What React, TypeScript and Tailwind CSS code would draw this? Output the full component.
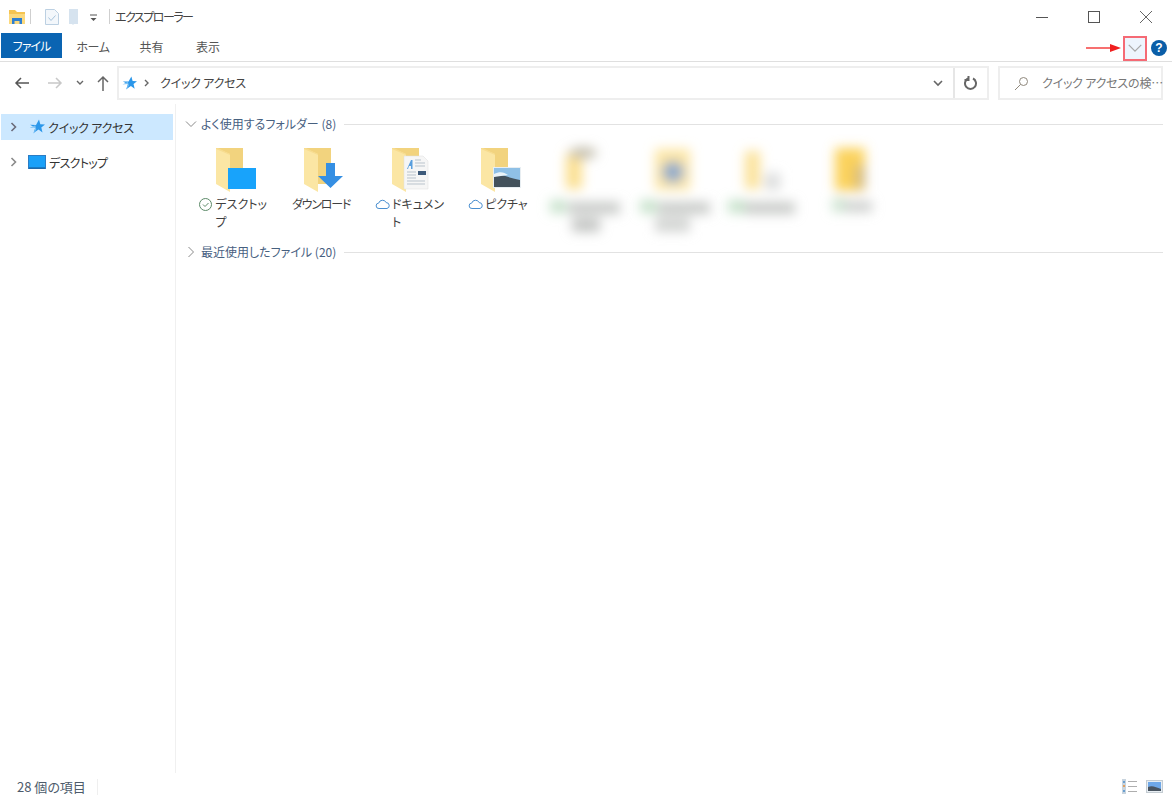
import type { ReactNode } from "react";

const jp = "font-['Noto_Sans_CJK_JP','Noto_Sans',sans-serif] [font-feature-settings:'palt']";

function Chevron({ open, className }: { open?: boolean; className?: string }) {
  return (
    <svg width="12" height="12" viewBox="0 0 12 12" fill="none" stroke="currentColor" strokeWidth="1" className={className}>
      <path d={open ? "M1 3.500l5 5 5-5" : "M3.500 1l5 5-5 5"} />
    </svg>
  );
}

function Star({ size = 16 }: { size?: number }) {
  return (
    <svg width={size} height={size} viewBox="0 0 16 16">
      <path d="M10 0.500l1.300 4.700 4.700.3-3.700 3 1.200 5-4-2.900-5 3.400 1.800-5.200L1 5.800l6 .1z" fill="#2b97ea" />
      <path d="M0.500 9l5.800-.6-1.800 6.600 2.800-4.800-1-4z" fill="#7cc2f4" />
    </svg>
  );
}

function FolderBack({ children }: { children?: ReactNode }) {
  return (
    <svg width="44" height="46" viewBox="0 0 44 46" className="block">
      <path d="M3 1h25v36H3z" fill="#f2d37e" />
      <path d="M1 1l14 6v38L1 37z" fill="#fbe6a4" />
      <path d="M1 1h2l12 6v1L1 2z" fill="#f7dc90" />
      {children}
    </svg>
  );
}

const folderArt: ReactNode[] = [
  <rect key="a" x="13" y="21" width="28" height="21" fill="#18a3fb" />,
  <path key="b" d="M23 16h9v13h8L27.500 41 15 29h8z" fill="#358fe3" />,
  <g key="c">
    <path d="M13 9h19l5 5v28H13z" fill="#f6f6f6" stroke="#dcdcdc" strokeWidth="0.500" />
    <path d="M16 22l4-9h1.500v9h-1.500v-3h-2l-1 3z" fill="#5a9fde" />
    <path d="M24 13h6M24 16h10M24 19h10M16 25h9M16 28h9M16 31h9M16 34h18M16 37h18" stroke="#b9c3cc" strokeWidth="1" />
    <rect x="27" y="24" width="8" height="4" fill="#3d5a7a" />
  </g>,
  <g key="d">
    <rect x="13" y="20" width="28" height="21" fill="#e8eef2" />
    <rect x="14" y="21" width="26" height="19" fill="#8fc0e6" />
    <path d="M14 30c6-4 12 0 26 3v7H14z" fill="#44525c" />
    <path d="M14 27c6-3 10-2 14 1l-14 2z" fill="#eaf3f8" />
  </g>,
];

function Tile({ art, lines, status, tight }: { art: number; lines: string[]; status?: "ok" | "cloud"; tight?: boolean }) {
  return (
    <div className="w-[88.400px] shrink-0 flex flex-col items-center">
      <div className="h-[46px] pl-[8px]">
        <FolderBack>{folderArt[art]}</FolderBack>
      </div>
      <div className={`mt-[2px] flex justify-center text-[12px] leading-[18px] text-[#3f3f3f] ${tight ? "tracking-[-1.200px]" : ""}`}>
        {status === "ok" && (
          <svg width="17" height="19" viewBox="0 0 17 19" fill="none" className="shrink-0">
            <circle cx="7.500" cy="9.500" r="6" stroke="#5c8a68" />
            <path d="M5 9.500l2 2 3.500-3.500" stroke="#5c8a68" />
          </svg>
        )}
        {status === "cloud" && (
          <svg width="17" height="19" viewBox="0 0 17 19" fill="none" className="shrink-0">
            <path d="M4 13.500a2.700 2.700 0 0 1-.3-5.400 4 4 0 0 1 7.500-.5 3 3 0 0 1 .8 5.900z" stroke="#4a8fd0" />
          </svg>
        )}
        <div className="text-left whitespace-nowrap">
          {lines.map((l) => (
            <div key={l}>{l}</div>
          ))}
        </div>
      </div>
    </div>
  );
}

function BlurTile({ tile }: { tile: number }) {
  const parts = [
    <g key="0">
      <rect x="24" y="6" width="16" height="36" fill="#fbdf90" />
      <ellipse cx="41" cy="6" rx="14" ry="6" fill="#c4bfae" />
      <rect x="8" y="53" width="16" height="13" fill="#c6e2ca" />
      <rect x="26" y="55" width="52" height="12" fill="#c8cac8" />
      <rect x="30" y="71" width="28" height="14" fill="#c4c6c4" />
    </g>,
    <g key="1">
      <rect x="25" y="2" width="35" height="41" fill="#fde6a4" />
      <circle cx="43" cy="25" r="11" fill="#8fabcc" />
      <rect x="10" y="53" width="17" height="13" fill="#c6e2ca" />
      <rect x="28" y="55" width="52" height="12" fill="#c8cac8" />
      <rect x="25" y="70" width="35" height="15" fill="#d4d6d4" />
    </g>,
    <g key="2">
      <rect x="26" y="4" width="15" height="38" fill="#fbe29a" />
      <rect x="46" y="26" width="15" height="17" fill="#dcdddd" />
      <rect x="9" y="53" width="17" height="13" fill="#c6e2ca" />
      <rect x="26" y="55" width="50" height="12" fill="#c8cac8" />
    </g>,
    <g key="3">
      <rect x="28" y="1" width="30" height="43" fill="#fbd25c" />
      <rect x="48" y="18" width="10" height="24" fill="#d2b87c" />
      <rect x="25" y="51" width="14" height="14" fill="#cfe5d2" />
      <rect x="38" y="54" width="27" height="11" fill="#cdcfcd" />
    </g>,
  ];
  return (
    <div className="w-[88.400px] shrink-0">
      <svg width="88" height="95" viewBox="0 0 88 95" className="block overflow-visible">
        <defs>
          <filter id={`soft${tile}`} x="-40%" y="-40%" width="180%" height="180%">
            <feGaussianBlur stdDeviation="6" />
          </filter>
        </defs>
        <g filter={`url(#soft${tile})`}>{parts[tile]}</g>
      </svg>
    </div>
  );
}

function SectionHead({ label, open, className }: { label: string; open?: boolean; className?: string }) {
  return (
    <div className={`flex items-center h-[22px] ${className ?? ""}`}>
      <Chevron open={open} className="text-[#8a8a8a] ml-[9px] mr-[4px] shrink-0" />
      <span className="text-[12px] text-[#47607f] whitespace-nowrap">{label}</span>
      <div className="flex-1 h-px bg-[#e2e2e2] ml-[8px]" />
    </div>
  );
}

export default function App() {
  return (
    <div className={`w-[1172px] h-[800px] overflow-hidden bg-white flex flex-col ${jp}`}>
      {/* title bar */}
      <div className="h-[33px] flex items-center shrink-0">
        <svg width="18" height="16" viewBox="0 0 18 16" className="ml-[8px]">
          <path d="M1 1h6l2 2h8v12H1z" fill="#f5c451" />
          <rect x="1" y="5" width="16" height="10" fill="#fbd97e" />
          <path d="M4 9h10v6h-2.500v-3h-5v3H4z" fill="#2f7fd0" />
        </svg>
        <div className="w-px h-[15px] bg-[#cfcfcf] ml-[4px]" />
        <svg width="16" height="18" viewBox="0 0 16 18" className="ml-[13px]">
          <path d="M1.500 1.500h9l4 4v11h-13z" fill="#f3f7fb" stroke="#bcd0e2" />
          <path d="M4.500 9.500l2.500 3 4.500-5" fill="none" stroke="#a8c4dc" />
        </svg>
        <svg width="12" height="18" viewBox="0 0 12 18" className="ml-[8px]">
          <path d="M1 1h9v15H6l-1 1-1-1H1z" fill="#d6e3ef" />
        </svg>
        <svg width="8" height="8" viewBox="0 0 8 8" className="ml-[10px] mt-[3px]">
          <path d="M0 1h7" stroke="#555" />
          <path d="M0.500 4h6L3.500 7z" fill="#555" />
        </svg>
        <div className="w-px h-[15px] bg-[#cfcfcf] ml-[11px]" />
        <span className="ml-[5px] text-[12px] text-[#444] tracking-[-1.500px]">エクスプローラー</span>
        <div className="flex-1" />
        <svg width="14" height="14" viewBox="0 0 14 14" className="mr-[38px]" stroke="#555" fill="none">
          <path d="M1 7.500h12" />
        </svg>
        <svg width="14" height="14" viewBox="0 0 14 14" className="mr-[38px]" stroke="#555" fill="none">
          <rect x="1.500" y="1.500" width="11" height="11" />
        </svg>
        <svg width="14" height="14" viewBox="0 0 14 14" className="mr-[19px]" stroke="#666" fill="none">
          <path d="M1 1l12 12M13 1L1 13" />
        </svg>
      </div>

      {/* ribbon tabs */}
      <div className="h-[29px] shrink-0 flex border-b border-[#dfdfdf] pl-[1px] text-[12px] text-[#555] whitespace-nowrap">
        <div className="w-[61px] h-[25px] bg-[#0a64b2] text-white flex items-center justify-center tracking-[-1px]">ファイル</div>
        <div className="ml-[15px] w-[32px] h-[27px] flex items-center justify-center tracking-[-0.500px]">ホーム</div>
        <div className="ml-[30px] w-[25px] h-[27px] flex items-center justify-center">共有</div>
        <div className="ml-[31px] w-[26px] h-[27px] flex items-center justify-center">表示</div>
        <div className="flex-1" />
        <div className="h-[26px] flex items-center mt-[2px]">
          <svg width="36" height="10" viewBox="0 0 36 10">
            <path d="M0 5h26" stroke="#f43333" strokeWidth="1.400" />
            <path d="M24 1l11 4-11 4z" fill="#f01f1f" />
          </svg>
          <div className="ml-[1px] w-[24px] h-[25px] border-2 border-[#f56a75] bg-[#eef5fd] flex items-center justify-center">
            <Chevron open className="text-[#a8a8a8] scale-125" />
          </div>
          <div className="ml-[4px] mr-[5px] w-[16px] h-[16px] rounded-full bg-[#0a5ea8] text-white text-[12px] font-bold leading-[16px] text-center font-['Liberation_Sans',sans-serif]">
            ?
          </div>
        </div>
      </div>

      {/* address row */}
      <div className="h-[42px] shrink-0 flex items-center">
        <svg width="16" height="14" viewBox="0 0 16 14" className="ml-[14px]" fill="none" stroke="#555" strokeWidth="1.500">
          <path d="M15 7H2M7 2L2 7l5 5" />
        </svg>
        <svg width="16" height="14" viewBox="0 0 16 14" className="ml-[17px]" fill="none" stroke="#c8c8c8" strokeWidth="1.500">
          <path d="M1 7h13M9 2l5 5-5 5" />
        </svg>
        <svg width="8" height="6" viewBox="0 0 8 6" className="ml-[13px]" fill="none" stroke="#666" strokeWidth="1.400">
          <path d="M1 1l3 3 3-3" />
        </svg>
        <svg width="14" height="16" viewBox="0 0 14 16" className="ml-[12px]" fill="none" stroke="#666" strokeWidth="1.500">
          <path d="M7 16V2M2 7l5-5 5 5" />
        </svg>
        <div className="ml-[7px] w-[872px] h-[34px] border-2 border-[#eeeeee] flex items-center">
          <div className="flex-1 flex items-center pl-[3px]">
            <Star size={15} />
            <svg width="6" height="8" viewBox="0 0 6 8" className="ml-[7px]" fill="none" stroke="#666" strokeWidth="1.400">
              <path d="M1 1l3 3-3 3" />
            </svg>
            <span className="ml-[10px] text-[12px] text-[#444] tracking-[-0.200px]">クイック アクセス</span>
          </div>
          <svg width="10" height="7" viewBox="0 0 10 7" className="mr-[10px]" fill="none" stroke="#666" strokeWidth="1.600">
            <path d="M1 1l4 4 4-4" />
          </svg>
          <div className="w-[34px] h-full border-l-2 border-[#e6e6e6] flex items-center justify-center">
            <svg width="14" height="14" viewBox="0 0 14 14" fill="none" stroke="#666" strokeWidth="2">
              <path d="M4 2.500a5.500 5.500 0 1 0 5 0M4.500 0v4h-4" />
            </svg>
          </div>
        </div>
        <div className="ml-[9px] w-[165px] h-[34px] border-2 border-[#eeeeee] flex items-center">
          <svg width="15" height="15" viewBox="0 0 15 15" className="ml-[14px] shrink-0" fill="none" stroke="#8f887c" strokeWidth="1">
            <circle cx="9.500" cy="5.500" r="4" />
            <path d="M6.500 8.500L1 14" />
          </svg>
          <span className="ml-[13px] text-[12px] text-[#777] whitespace-nowrap tracking-[-0.200px]">クイック アクセスの検…</span>
        </div>
      </div>

      {/* body */}
      <div className="flex-1 flex min-h-0">
        <div className="w-[176px] shrink-0 border-r border-[#f0f0f0] pt-[10px] pl-[1px] text-[12px] text-[#333] tracking-[-0.200px]">
          <div className="w-[172px] h-[26px] bg-[#cce8ff] flex items-center">
            <svg width="8" height="10" viewBox="0 0 8 10" className="ml-[9px]" fill="none" stroke="#6b6b7a" strokeWidth="1.600">
              <path d="M1.500 1l4 4-4 4" />
            </svg>
            <div className="ml-[11px]"><Star /></div>
            <span className="ml-[3px] pt-[1px]">クイック アクセス</span>
          </div>
          <div className="mt-[9px] w-[172px] h-[26px] flex items-center">
            <svg width="8" height="10" viewBox="0 0 8 10" className="ml-[9px]" fill="none" stroke="#8a8a8a" strokeWidth="1.600">
              <path d="M1.500 1l4 4-4 4" />
            </svg>
            <svg width="18" height="14" viewBox="0 0 18 14" className="ml-[10px]">
              <rect x="0.500" y="0.500" width="17" height="13" fill="#1aa0f8" stroke="#2b7cc4" />
              <path d="M1 13h16" stroke="#16568f" />
            </svg>
            <span className="ml-[3px] pt-[1px] tracking-[-0.700px]">デスクトップ</span>
          </div>
        </div>

        <div className="flex-1 min-w-0 pt-[9px] pr-[9px]">
          <SectionHead open label="よく使用するフォルダー (8)" />
          <div className="flex pl-[12.500px] mt-[12px] h-[95px]">
            <Tile art={0} status="ok" lines={["デスクトッ", "プ"]} />
            <Tile art={1} tight lines={["ダウンロード"]} />
            <Tile art={2} status="cloud" lines={["ドキュメン", "ト"]} />
            <Tile art={3} status="cloud" lines={["ピクチャ"]} />
            <BlurTile tile={0} />
            <BlurTile tile={1} />
            <BlurTile tile={2} />
            <BlurTile tile={3} />
          </div>
          <SectionHead label="最近使用したファイル (20)" className="mt-[-1px]" />
        </div>
      </div>

      {/* status bar */}
      <div className="h-[27px] shrink-0 flex items-center pl-[17px] text-[13px] text-[#4d5b6b]">
        <span>28 個の項目</span>
        <div className="ml-[11px] w-px h-[16px] bg-[#efefef]" />
        <div className="flex-1" />
        <svg width="16" height="15" viewBox="0 0 16 15" fill="none">
          <rect x="0" y="0" width="4" height="15" fill="#c8d4de" />
          <rect x="1" y="2" width="2" height="2" fill="#6a9fd0" />
          <rect x="1" y="6" width="2" height="2" fill="#e0a060" />
          <rect x="1" y="11" width="2" height="2" fill="#6a9fd0" />
          <path d="M6 2.500h9M6 7.500h9M6 12.500h9" stroke="#aeaeae" />
        </svg>
        <svg width="17" height="13" viewBox="0 0 17 13" className="ml-[8px] mr-[9px]">
          <rect x="0.500" y="0.500" width="16" height="12" fill="#e8eef3" stroke="#c4ccd2" />
          <rect x="2" y="2" width="13" height="9" fill="#6fa8e8" />
          <path d="M2 7c4-2 8 0 13 2v2H2z" fill="#4a5560" />
        </svg>
      </div>
    </div>
  );
}
